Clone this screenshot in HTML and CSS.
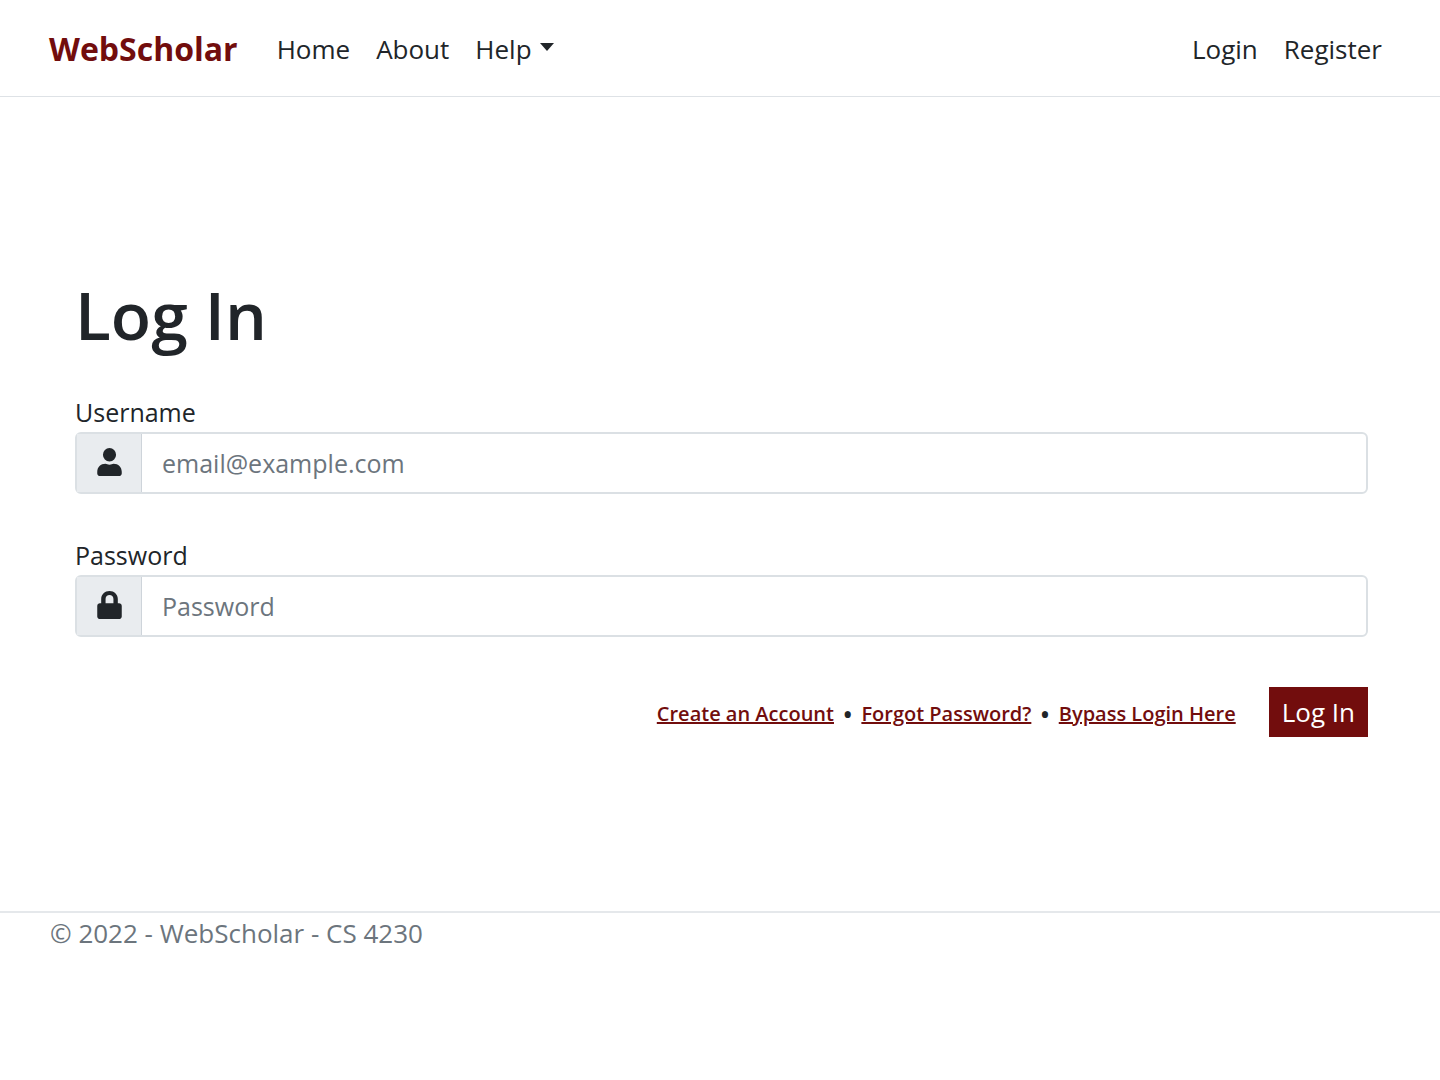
FILE: index.html
```html
<!DOCTYPE html>
<html lang="en">
<head>
  <meta charset="UTF-8" />
  <meta name="viewport" content="width=device-width, initial-scale=1.0" />
  <title>Log In - WebScholar</title>
  <link rel="stylesheet" href="styles.css">
</head>
<body>
  <header>
    <nav class="navbar">
      <a class="brand" href="#">WebScholar</a>
      <ul class="nav-list">
        <li><a href="#">Home</a></li>
        <li><a href="#">About</a></li>
        <li><a class="dropdown" href="#">Help</a></li>
      </ul>
      <ul class="nav-list nav-right">
        <li><a href="#">Login</a></li>
        <li><a href="#">Register</a></li>
      </ul>
    </nav>
  </header>

  <main>
    <h1>Log In</h1>
    <form>
      <div class="field">
        <label for="username">Username</label>
        <div class="input-group">
          <span class="icon">
            <svg viewBox="0 0 448 512" aria-hidden="true"><path d="M224 248a120 124 0 1 0 0-248 120 124 0 1 0 0 248zM150 288C62 288 0 350 0 436v28c0 26 22 48 48 48h352c26 0 48-22 48-48v-28c0-86-62-148-150-148-24 0-40 16-74 16s-50-16-74-16z"/></svg>
          </span>
          <input type="email" id="username" placeholder="email@example.com" />
        </div>
      </div>

      <div class="field">
        <label for="password">Password</label>
        <div class="input-group">
          <span class="icon">
            <svg viewBox="0 0 448 512" aria-hidden="true"><path d="M152 144v80h144v-80c0-40-32-70-72-70s-72 30-72 70zM72 224v-80C72 64 140 0 224 0s152 64 152 144v80h24c26 0 48 22 48 48v192c0 26-22 48-48 48H48c-26 0-48-22-48-48V272c0-26 22-48 48-48h24z"/></svg>
          </span>
          <input type="password" id="password" placeholder="Password" />
        </div>
      </div>

      <div class="actions">
        <div class="links">
          <a href="#">Create an Account</a>
          <span>•</span>
          <a href="#">Forgot Password?</a>
          <span>•</span>
          <a href="#">Bypass Login Here</a>
        </div>
        <button type="submit">Log In</button>
      </div>
    </form>
  </main>

  <footer>© 2022 - WebScholar - CS 4230</footer>
</body>
</html>
```
FILE: styles.css
```css
* {
  box-sizing: border-box;
}
body {
  margin: 0;
  font-family: "Segoe UI", "Open Sans", sans-serif;
  font-size: 26px;
  line-height: 40px;
  color: #212529;
  background-color: #fff;
}
.navbar {
  display: flex;
  align-items: center;
  padding: 29px 58px 27px 49px;
  border-bottom: 1px solid #dee2e6;
}
.navbar a {
  color: #212529;
  text-decoration: none;
}
.navbar .brand {
  margin-right: 39px;
  font-size: 32px;
  font-weight: bold;
  color: #720d0d;
}
.nav-list {
  display: flex;
  gap: 26px;
  margin: 0;
  padding: 0;
  list-style: none;
}
.nav-right {
  margin-left: auto;
}
.dropdown {
  display: flex;
  align-items: center;
  gap: 8px;
}
.dropdown::after {
  content: "";
  margin-bottom: 4px;
  border-top: 8px solid;
  border-left: 7px solid transparent;
  border-right: 7px solid transparent;
}
main {
  padding: 177px 72px 174px 75px;
}
h1 {
  margin: 0 0 38px;
  font-size: 66px;
  font-weight: 600;
  line-height: 80px;
}
form {
  font-size: 25px;
}
.field {
  margin-bottom: 41px;
}
label {
  display: block;
}
.input-group {
  display: flex;
  height: 62px;
  border: 2px solid #dbe0e4;
  border-radius: 6px;
}
.icon {
  display: flex;
  align-items: center;
  justify-content: center;
  width: 65px;
  padding-bottom: 2px;
  background-color: #e9ecef;
  border-right: 1px solid #ced4da;
}
.icon svg {
  width: 25px;
  height: 28px;
  fill: #212529;
}
input {
  flex: 1;
  min-width: 0;
  padding: 0 20px;
  border: none;
  border-radius: 6px;
  font: inherit;
  color: #212529;
}
input::placeholder {
  color: #6c757d;
}
.actions {
  display: flex;
  align-items: center;
  justify-content: flex-end;
  gap: 33px;
  padding-top: 9px;
}
.links {
  display: flex;
  gap: 9px;
  padding-top: 3px;
  font-size: 20px;
  font-weight: 600;
}
.links a {
  color: #720d0d;
}
.links span {
  font-size: 25px;
}
button {
  height: 50px;
  padding: 0 13px;
  border: none;
  font: inherit;
  font-size: 26px;
  color: #fff;
  background-color: #720d0d;
  cursor: pointer;
}
footer {
  padding: 0 50px;
  border-top: 2px solid #e5e8eb;
  color: #6c757d;
}
```
